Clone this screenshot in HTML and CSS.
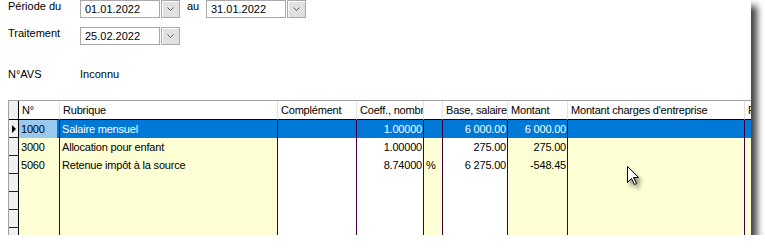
FILE: index.html
```html
<!DOCTYPE html>
<html lang="fr">
<head>
    <meta charset="UTF-8">
    <title>Salaires</title>
    <link rel="stylesheet" href="styles.css">
</head>
<body>
    <div class="window">
        <div class="filters">
            <div class="filter-row">
                <span class="label">Période du</span>
                <div class="combo">
                    <span class="combo-value">01.01.2022</span>
                    <span class="combo-btn"><svg width="7" height="4" viewBox="0 0 7 4"><polyline points="0.5,0.5 3.5,3.5 6.5,0.5" fill="none" stroke="#5a5a5a" stroke-width="1"/></svg></span>
                </div>
                <span class="label label-au">au</span>
                <div class="combo">
                    <span class="combo-value">31.01.2022</span>
                    <span class="combo-btn"><svg width="7" height="4" viewBox="0 0 7 4"><polyline points="0.5,0.5 3.5,3.5 6.5,0.5" fill="none" stroke="#5a5a5a" stroke-width="1"/></svg></span>
                </div>
            </div>
            <div class="filter-row">
                <span class="label">Traitement</span>
                <div class="combo">
                    <span class="combo-value">25.02.2022</span>
                    <span class="combo-btn"><svg width="7" height="4" viewBox="0 0 7 4"><polyline points="0.5,0.5 3.5,3.5 6.5,0.5" fill="none" stroke="#5a5a5a" stroke-width="1"/></svg></span>
                </div>
            </div>
            <div class="info-row">
                <span class="label">N°AVS</span>
                <span>Inconnu</span>
            </div>
        </div>

        <div class="grid">
            <table>
                <colgroup>
                    <col class="c-ind">
                    <col class="c-no y">
                    <col class="c-rub y">
                    <col class="c-comp w">
                    <col class="c-coeff w">
                    <col class="c-pct y">
                    <col class="c-base w">
                    <col class="c-mnt y">
                    <col class="c-charges y">
                    <col class="c-rem y">
                </colgroup>
                <thead>
                    <tr>
                        <th class="ind"></th>
                        <th>N°</th>
                        <th>Rubrique</th>
                        <th>Complément</th>
                        <th>Coeff., nombre</th>
                        <th></th>
                        <th>Base, salaire</th>
                        <th>Montant</th>
                        <th>Montant charges d'entreprise</th>
                        <th>Remarque</th>
                    </tr>
                </thead>
                <tbody>
                    <tr class="selected">
                        <td class="ind"><span class="current"></span></td>
                        <td class="focus">1000</td>
                        <td>Salaire mensuel</td>
                        <td></td>
                        <td class="num">1.00000</td>
                        <td></td>
                        <td class="num">6 000.00</td>
                        <td class="num">6 000.00</td>
                        <td></td>
                        <td></td>
                    </tr>
                    <tr>
                        <td class="ind"></td>
                        <td>3000</td>
                        <td>Allocation pour enfant</td>
                        <td></td>
                        <td class="num">1.00000</td>
                        <td></td>
                        <td class="num">275.00</td>
                        <td class="num">275.00</td>
                        <td></td>
                        <td></td>
                    </tr>
                    <tr>
                        <td class="ind"></td>
                        <td>5060</td>
                        <td>Retenue impôt à la source</td>
                        <td></td>
                        <td class="num">8.74000</td>
                        <td>%</td>
                        <td class="num">6 275.00</td>
                        <td class="num">-548.45</td>
                        <td></td>
                        <td></td>
                    </tr>
                    <tr><td class="ind"></td><td></td><td></td><td></td><td></td><td></td><td></td><td></td><td></td><td></td></tr>
                    <tr><td class="ind"></td><td></td><td></td><td></td><td></td><td></td><td></td><td></td><td></td><td></td></tr>
                    <tr><td class="ind"></td><td></td><td></td><td></td><td></td><td></td><td></td><td></td><td></td><td></td></tr>
                    <tr><td class="ind"></td><td></td><td></td><td></td><td></td><td></td><td></td><td></td><td></td><td></td></tr>
                </tbody>
            </table>
        </div>

        <!-- mouse pointer over the grid -->
        <svg class="cursor" width="13" height="20" viewBox="0 0 13 20">
            <path d="M0.5 0.5 L0.5 16.5 L4.5 12.5 L7.5 18.5 L9.5 17.5 L6.5 11.5 L11.5 11.5 Z" fill="#fff" stroke="#000" stroke-width="1" stroke-linejoin="miter"/>
        </svg>
    </div>
</body>
</html>
```

FILE: styles.css
```css
body {
    margin: 0;
    background-color: #fff;
    font-family: "Liberation Sans", Arial, sans-serif;
    font-size: 11px;
    color: #000;
}

.window {
    position: relative;
    width: 751px;
    height: 235px;
    background-color: #fff;
    overflow: hidden;
    box-shadow: 6px 6px 7px rgba(0, 0, 0, 0.75);
}

.filters {
    padding-left: 8px;
}

.filter-row {
    display: flex;
    align-items: flex-start;
    height: 18px;
}

.filter-row + .filter-row {
    margin-top: 9px;
}

.label {
    width: 72px;
    line-height: 13px;
    white-space: nowrap;
}

.label-au {
    width: 19px;
    margin-left: 7px;
}

.combo {
    display: flex;
}

.combo-value {
    box-sizing: border-box;
    width: 80px;
    height: 18px;
    border: 1px solid #a9a9a9;
    padding-left: 4px;
    line-height: 16px;
}

.combo-btn {
    box-sizing: border-box;
    width: 19px;
    height: 18px;
    margin-left: 1px;
    border: 1px solid #a9a9a9;
    background-color: #e1e1e1;
    box-shadow: inset 1px 1px 0 #fff;
    display: flex;
    align-items: center;
    justify-content: center;
}

.info-row {
    display: flex;
    margin-top: 23px;
    line-height: 13px;
}

.grid {
    box-sizing: border-box;
    margin: 19px 0 0 8px;
    height: 135px;
    border-top: 1px solid #a0a0a0;
    border-left: 1px solid #a0a0a0;
    overflow: hidden;
    letter-spacing: -0.2px;
}

.grid table {
    border-collapse: separate;
    border-spacing: 0;
    table-layout: fixed;
    width: 796px;
}

.c-ind { width: 10px; }
.c-no { width: 41px; }
.c-rub { width: 218px; }
.c-comp { width: 79px; }
.c-coeff { width: 67px; }
.c-pct { width: 19px; }
.c-base { width: 65px; }
.c-mnt { width: 60px; }
.c-charges { width: 177px; }
.c-rem { width: 60px; }

col.y {
    background-color: #ffffd5;
}

col.w {
    background-color: #fff;
}

.grid th,
.grid td {
    box-sizing: border-box;
    padding: 0 2px;
    line-height: 18px;
    white-space: nowrap;
    overflow: hidden;
}

.grid th {
    height: 19px;
    padding-left: 3px;
    font-weight: normal;
    text-align: left;
    background-color: #fff;
    border-right: 1px solid #e3e3e3;
    border-bottom: 1px solid #000;
}

.grid td {
    height: 18px;
    border-right: 1px solid #400040;
}

.grid td.num {
    text-align: right;
    padding-right: 1px;
}

.grid .ind {
    padding: 0;
    background-color: #f0f0f0;
    border-right: 1px solid #000;
}

.grid td.ind {
    border-bottom: 1px solid #222;
    position: relative;
}

.current {
    position: absolute;
    left: 3px;
    top: 5px;
    width: 0;
    height: 0;
    border-left: 4px solid #000;
    border-top: 4px solid transparent;
    border-bottom: 4px solid transparent;
}

.selected td {
    background-color: #0078d7;
    color: #fff;
}

.selected td.ind {
    background-color: #f0f0f0;
}

.selected td.focus {
    background-color: #99c9ef;
    color: #000;
    box-shadow: inset -2px 0 0 #0078d7;
}

.cursor {
    position: absolute;
    left: 627px;
    top: 166px;
    filter: drop-shadow(3px 4px 2px rgba(0, 0, 0, 0.45));
}
```
